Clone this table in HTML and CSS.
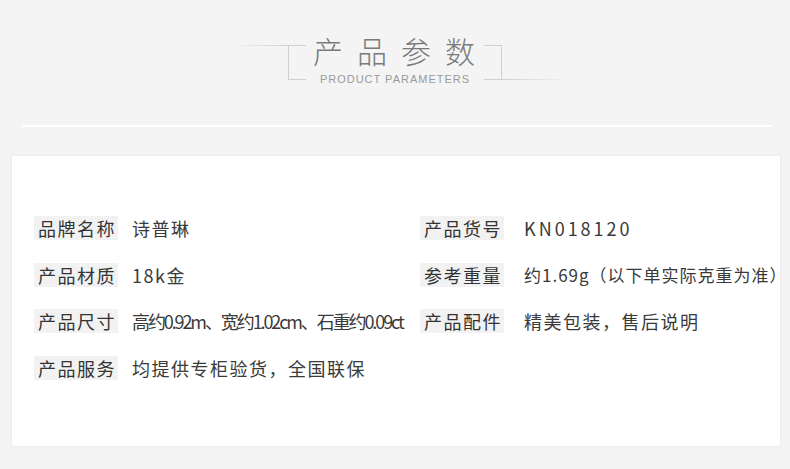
FILE: index.html
```html
<!DOCTYPE html>
<html lang="zh-CN">
<head>
    <meta charset="UTF-8">
    <meta name="viewport" content="width=device-width, initial-scale=1.0">
    <title>产品参数</title>
    <link rel="stylesheet" href="styles.css">
</head>
<body>
    <div class="head">
        <div class="tail tail-l"></div>
        <div class="brk brk-l"></div>
        <div class="title">
            <div class="cn">产品参数</div>
            <div class="en">PRODUCT PARAMETERS</div>
        </div>
        <div class="brk brk-r"></div>
        <div class="tail tail-r"></div>
    </div>
    <div class="rule"></div>
    <div class="panel">
        <div class="grid">
            <div class="item">
                <span class="label">品牌名称</span>
                <span class="value">诗普琳</span>
            </div>
            <div class="item item-r">
                <span class="label">产品货号</span>
                <span class="value latin">KN018120</span>
            </div>
            <div class="item">
                <span class="label">产品材质</span>
                <span class="value">18k金</span>
            </div>
            <div class="item item-r">
                <span class="label">参考重量</span>
                <span class="value tight">约1.69g（以下单实际克重为准）</span>
            </div>
            <div class="item">
                <span class="label">产品尺寸</span>
                <span class="value narrow">高约0.92m、宽约1.02cm、石重约0.09ct</span>
            </div>
            <div class="item item-r">
                <span class="label">产品配件</span>
                <span class="value">精美包装，售后说明</span>
            </div>
            <div class="item">
                <span class="label">产品服务</span>
                <span class="value">均提供专柜验货，全国联保</span>
            </div>
        </div>
    </div>
</body>
</html>
```

FILE: styles.css
```css
*{
    margin: 0;
    padding: 0;
    box-sizing: border-box;
}
body{
    width: 790px;
    height: 469px;
    overflow: hidden;
    background: #f4f4f4;
    font-family: "Noto Sans CJK SC", "Noto Sans", sans-serif;
    color: #3a3a3a;
}
.head{
    display: flex;
    justify-content: center;
    align-items: flex-start;
    padding: 35px 0 0 12px;
}
.tail{
    height: 1px;
}
.tail-l{
    width: 56px;
    margin-top: 10px;
    background: linear-gradient(to right, rgba(204,204,204,0), #cfcfcf);
}
.tail-r{
    width: 68px;
    margin-top: 44px;
    background: linear-gradient(to right, #cfcfcf, rgba(204,204,204,0));
}
.brk{
    width: 18px;
    height: 35px;
    margin-top: 10px;
    border: 1px solid #cfcfcf;
}
.brk-l{
    border-right: none;
}
.brk-r{
    border-left: none;
}
.title{
    width: 178px;
    text-align: center;
}
.cn{
    white-space: nowrap;
    font-size: 30px;
    line-height: 30px;
    font-weight: 300;
    letter-spacing: 14px;
    padding-left: 7px;
    color: #7a7a7a;
}
.en{
    margin-top: 7px;
    white-space: nowrap;
    font-family: "Liberation Sans", Arial, sans-serif;
    font-size: 11px;
    line-height: 14px;
    letter-spacing: 1px;
    color: #9a9a9a;
}
.rule{
    width: 751px;
    height: 2px;
    margin: 39px 0 0 22px;
    background: #fff;
}
.panel{
    width: 770px;
    height: 292px;
    margin: 28px 0 0 11px;
    padding: 60px 0 0 22px;
    background: #fff;
    border: 1px solid #ededed;
}
.grid{
    display: grid;
    grid-template-columns: 386px auto;
    row-gap: 22.5px;
}
.item{
    display: flex;
    align-items: center;
    gap: 14px;
    white-space: nowrap;
    font-size: 18px;
    line-height: 24px;
}
.item-r{
    gap: 20px;
}
.label{
    padding: 0 2px 0 4px;
    letter-spacing: 1.5px;
    background: #f2f2f2;
    color: #333;
}
.value{
    letter-spacing: 1.5px;
}
.latin{
    letter-spacing: 3px;
}
.tight{
    font-size: 17px;
    letter-spacing: 1px;
}
.narrow{
    letter-spacing: -2.1px;
}
```
